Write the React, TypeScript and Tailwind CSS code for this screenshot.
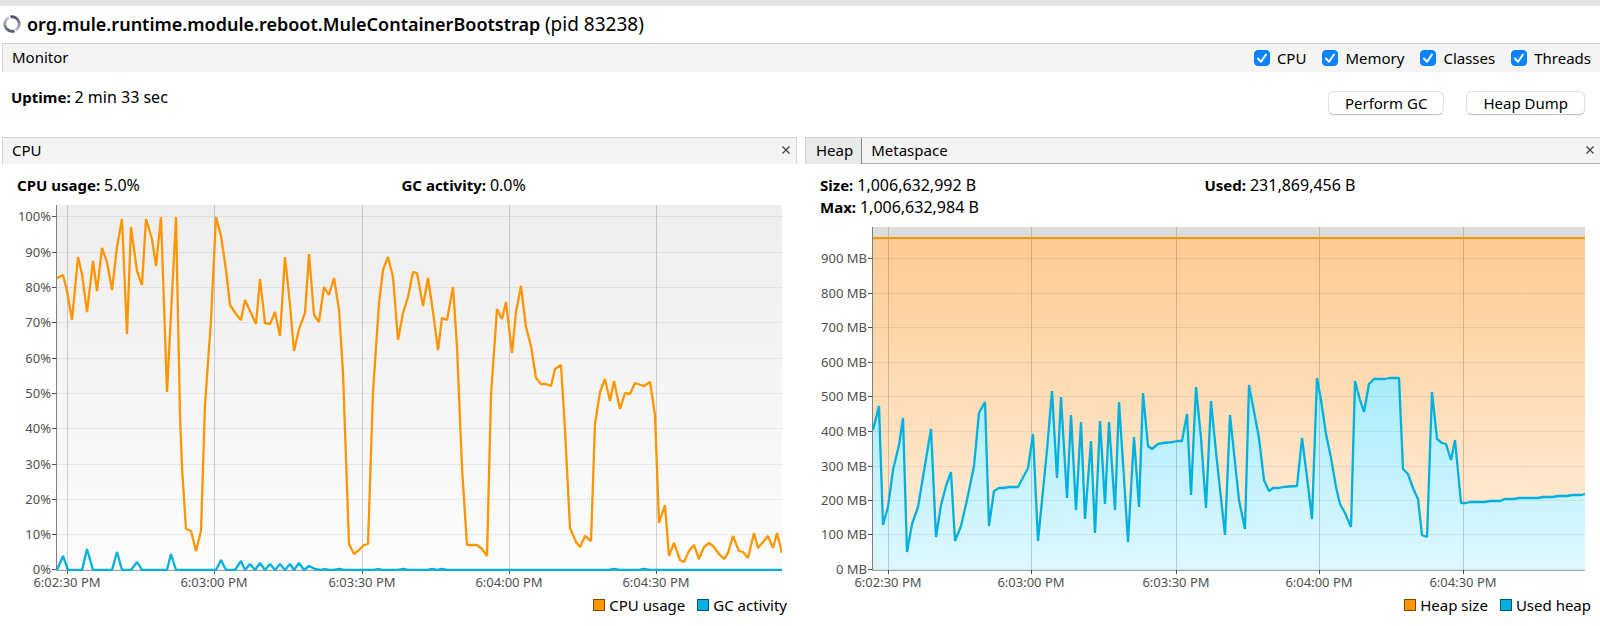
import React from 'react';
import { clsx } from 'clsx';

interface TickProps {
  pos: number;
  label: string;
}

const CPU_USAGE =
  '57,278 63,275 67,291 72,320 78,257 82,274 87,312 93,261 97,291 102,248 107,262 112,290 117,247 122,219 127,334 131,227 137,271 142,285 146,219 152,239 156,266 161,217 167,392 176,217 180,415 182,468 186,529 191,531 196,551 201,531 205,405 211,320 216,217 221,236 226,270 230,305 236,314 241,320 245,300 256,324 260,279 265,323 270,324 275,312 280,336 285,257 290,305 294,351 299,329 305,313 309,254 314,315 319,322 324,287 329,295 334,278 339,310 343,373 349,544 354,554 359,550 364,545 368,544 373,392 379,303 383,270 388,257 393,277 398,340 403,313 408,297 413,272 417,273 423,306 428,278 433,312 438,350 442,318 447,320 453,287 457,347 462,468 467,545 477,545 482,549 487,556 491,395 497,309 502,319 506,302 512,353 516,312 521,286 526,327 531,346 536,378 541,384 546,384 551,386 555,369 561,365 565,430 570,528 576,542 580,547 585,536 591,541 595,424 600,392 605,379 610,401 614,381 620,409 625,393 630,394 635,383 644,386 650,382 655,415 659,523 665,505 669,556 674,543 680,560 684,562 689,551 694,545 699,559 704,547 709,543 713,546 719,554 724,559 728,553 733,536 739,551 743,552 748,558 754,533 758,548 768,536 773,548 777,533 782,553';

const GC_ACTIVITY =
  '57,570 63,556 68,570 82,570 87,549 93,570 112,570 117,552 122,570 131,570 137,562 142,570 167,570 171,554 176,570 216,570 221,560 226,570 235,570 241,561 245,570 250,564 255,570 260,563 265,570 270,564 275,570 280,564 285,570 290,564 294,570 299,563 304,570 309,566 315,569 320,570 324,569 329,570 334,570 339,569 344,570 374,570 379,569 383,570 398,570 403,569 408,570 427,570 432,569 437,570 442,569 447,570 609,570 614,569 620,570 639,570 644,569 650,570 782,570';

const USED_HEAP =
  '873,430 879,406 883,525 888,507 893,470 899,445 903,418 907,552 912,524 918,507 931,429 936,537 941,505 946,486 951,472 955,541 961,526 967,500 974,466 979,413 985,402 989,526 994,491 999,488 1004,488 1009,487 1018,487 1028,468 1033,434 1038,541 1047,450 1052,391 1057,478 1061,397 1067,498 1071,415 1076,510 1081,422 1085,519 1091,441 1095,533 1100,421 1105,504 1109,422 1115,510 1119,402 1124,478 1128,542 1134,437 1139,507 1143,393 1148,446 1152,449 1158,444 1163,443 1173,442 1177,441 1182,441 1187,414 1191,495 1196,387 1201,438 1206,508 1211,401 1216,452 1225,535 1230,415 1239,500 1245,529 1249,385 1259,438 1264,480 1269,491 1273,488 1279,488 1283,487 1297,486 1302,438 1307,477 1312,519 1317,378 1321,400 1326,434 1331,458 1336,487 1340,504 1345,513 1351,527 1355,381 1360,400 1364,412 1369,384 1374,379 1385,379 1389,378 1399,378 1403,469 1408,474 1413,488 1418,499 1422,535 1427,537 1432,392 1437,439 1442,443 1446,444 1451,460 1455,440 1461,503 1466,503 1470,502 1485,502 1490,501 1500,501 1505,499 1514,499 1519,498 1538,498 1543,497 1553,497 1558,496 1567,496 1572,495 1581,495 1585,494';

const CPU_Y: TickProps[] = [
  { pos: 216, label: '100%' },
  { pos: 252, label: '90%' },
  { pos: 287, label: '80%' },
  { pos: 322, label: '70%' },
  { pos: 358, label: '60%' },
  { pos: 393, label: '50%' },
  { pos: 428, label: '40%' },
  { pos: 464, label: '30%' },
  { pos: 499, label: '20%' },
  { pos: 534, label: '10%' },
  { pos: 569, label: '0%' },
];

const CPU_X: TickProps[] = [
  { pos: 67, label: '6:02:30 PM' },
  { pos: 214, label: '6:03:00 PM' },
  { pos: 362, label: '6:03:30 PM' },
  { pos: 509, label: '6:04:00 PM' },
  { pos: 656, label: '6:04:30 PM' },
];

const HEAP_Y: TickProps[] = [
  { pos: 258, label: '900 MB' },
  { pos: 293, label: '800 MB' },
  { pos: 327, label: '700 MB' },
  { pos: 362, label: '600 MB' },
  { pos: 396, label: '500 MB' },
  { pos: 431, label: '400 MB' },
  { pos: 466, label: '300 MB' },
  { pos: 500, label: '200 MB' },
  { pos: 534, label: '100 MB' },
  { pos: 569, label: '0 MB' },
];

const HEAP_X: TickProps[] = [
  { pos: 888, label: '6:02:30 PM' },
  { pos: 1031, label: '6:03:00 PM' },
  { pos: 1176, label: '6:03:30 PM' },
  { pos: 1319, label: '6:04:00 PM' },
  { pos: 1463, label: '6:04:30 PM' },
];

interface GridProps {
  xTicks: TickProps[];
  yTicks: TickProps[];
  left: number;
  right: number;
  top: number;
  bottom: number;
}

// Grid lines inside the plot area
const Grid: React.FC<GridProps> = ({ xTicks, yTicks, left, right, top, bottom }) => (
  <g stroke="#000" strokeWidth="1">
    {yTicks.map(t => (
      <line key={t.label} x1={left} x2={right} y1={t.pos + 0.5} y2={t.pos + 0.5} strokeOpacity="0.13" strokeDasharray="1 1" />
    ))}
    {xTicks.map(t => (
      <line key={t.label} x1={t.pos + 0.5} x2={t.pos + 0.5} y1={top} y2={bottom} strokeOpacity="0.17" />
    ))}
  </g>
);

// Axis lines, tick marks and their labels
const Axes: React.FC<GridProps> = ({ xTicks, yTicks, left, right, top, bottom }) => (
  <g fill="#505050" fontSize="13">
    <rect x={left - 1} y={top} width="1" height={bottom - top + 1} fill="#808080" />
    <rect x={left - 1} y={bottom} width={right - left + 1} height="1" fill="#a0a0a0" />
    {yTicks.map(t => (
      <g key={t.label}>
        <rect x={left - 5} y={t.pos} width="4" height="1" />
        <text x={left - 6} y={t.pos + 5} textAnchor="end">{t.label}</text>
      </g>
    ))}
    {xTicks.map(t => (
      <g key={t.label}>
        <rect x={t.pos} y={bottom} width="1" height="4" />
        <text x={t.pos} y={bottom + 17} textAnchor="middle">{t.label}</text>
      </g>
    ))}
  </g>
);

const CpuChart: React.FC = () => {
  const area = { xTicks: CPU_X, yTicks: CPU_Y, left: 57, right: 782, top: 205, bottom: 570 };

  return (
    <svg viewBox="2 205 795 388" className="block w-full h-auto" role="img" aria-label="CPU usage and GC activity">
      <defs>
        <linearGradient id="cpu-bg" x1="0" y1="0" x2="0" y2="1">
          <stop offset="0" stopColor="#eeeeee" />
          <stop offset="1" stopColor="#fcfcfc" />
        </linearGradient>
        <clipPath id="cpu-clip">
          <rect x="57" y="205" width="725" height="366" />
        </clipPath>
      </defs>
      <rect x="57" y="205" width="725" height="365" fill="url(#cpu-bg)" />
      <Grid {...area} />
      <Axes {...area} />
      <g fill="none" strokeWidth="2.3" strokeLinejoin="bevel" clipPath="url(#cpu-clip)">
        <polyline points={CPU_USAGE} stroke="#ff9500" />
        <polyline points={GC_ACTIVITY} stroke="#00b0de" />
      </g>
    </svg>
  );
};

const HeapChart: React.FC = () => {
  const area = { xTicks: HEAP_X, yTicks: HEAP_Y, left: 873, right: 1585, top: 227, bottom: 570 };

  return (
    <svg viewBox="805 227 795 366" className="block w-full h-auto" role="img" aria-label="Heap size and used heap">
      <defs>
        <linearGradient id="heap-size" gradientUnits="userSpaceOnUse" x1="0" y1="238" x2="0" y2="570">
          <stop offset="0" stopColor="#fecb93" />
          <stop offset="1" stopColor="#fff0de" />
        </linearGradient>
        <linearGradient id="heap-used" gradientUnits="userSpaceOnUse" x1="0" y1="378" x2="0" y2="570">
          <stop offset="0" stopColor="#a9ecfc" />
          <stop offset="1" stopColor="#def8ff" />
        </linearGradient>
      </defs>
      <rect x="873" y="227" width="712" height="343" fill="#dcdcdc" />
      <rect x="873" y="238" width="712" height="332" fill="url(#heap-size)" />
      <polygon points={`873,570 ${USED_HEAP} 1585,570`} fill="url(#heap-used)" />
      <Grid {...area} />
      <rect x="873" y="237" width="712" height="2" fill="#ff9500" />
      <Axes {...area} />
      <polyline points={USED_HEAP} fill="none" stroke="#00b0de" strokeWidth="2.3" strokeLinejoin="bevel" />
    </svg>
  );
};

interface LegendProps {
  items: { label: string; color: string }[];
  className?: string;
}

const Legend: React.FC<LegendProps> = ({ items, className }) => (
  <ul className={clsx('flex justify-end gap-3 leading-6', className)}>
    {items.map(item => (
      <li key={item.label} className="flex items-center gap-1">
        <span className={clsx('h-3 w-3 border border-black/50', item.color)} />
        {item.label}
      </li>
    ))}
  </ul>
);

const CloseButton: React.FC<{ label: string }> = ({ label }) => (
  <button type="button" aria-label={label} className="ml-auto mr-1 p-0.5 text-[#4a4a4a]">
    <svg width="8" height="8" viewBox="0 0 8 8" stroke="currentColor" strokeWidth="1.4">
      <path d="M0.5 0.5L7.5 7.5M7.5 0.5L0.5 7.5" />
    </svg>
  </button>
);

const Stat: React.FC<{ name: string; value: string }> = ({ name, value }) => (
  <p>
    <b className="font-bold">{name}:</b> <span className="text-[16px] leading-none">{value}</span>
  </p>
);

const CheckOption: React.FC<{ label: string }> = ({ label }) => (
  <label className="flex items-center gap-[7px]">
    <span className="relative h-4 w-4">
      <input
        type="checkbox"
        defaultChecked
        className="peer block h-4 w-4 appearance-none rounded-[4px] border border-gray-300 bg-white checked:border-[#0a7cf5] checked:bg-[#0a84ff]"
      />
      <svg
        viewBox="0 0 16 16"
        className="pointer-events-none absolute inset-0 hidden h-4 w-4 peer-checked:block"
        fill="none"
        stroke="#fff"
        strokeWidth="2"
        strokeLinecap="round"
        strokeLinejoin="round"
      >
        <path d="M4 8.5L7 11.8L12 4.5" />
      </svg>
    </span>
    {label}
  </label>
);

const PushButton: React.FC<{ label: string }> = ({ label }) => (
  <button
    type="button"
    className="h-6 rounded-md border border-[#e2e2e2] border-b-[#c4c4c4] bg-white px-4 leading-5 shadow-xs"
  >
    {label}
  </button>
);

// Open ring made of two swooshes, dark at the heads and fading at the tails
const AppIcon: React.FC = () => (
  <svg width="18" height="18" viewBox="0 0 18 18" fill="none">
    <defs>
      <linearGradient id="ring-right" x1="0" y1="0" x2="0" y2="1">
        <stop offset="0" stopColor="#4e5368" />
        <stop offset="1" stopColor="#c9cbd2" />
      </linearGradient>
      <linearGradient id="ring-left" x1="0" y1="0" x2="0" y2="1">
        <stop offset="0" stopColor="#cfcfd4" />
        <stop offset="1" stopColor="#565c70" />
      </linearGradient>
    </defs>
    <path d="M7.5 1.9A7.3 7.3 0 0 1 12.5 15.4" stroke="url(#ring-right)" strokeWidth="3" />
    <path d="M11.5 15.9A7.3 7.3 0 0 1 6 2.4" stroke="url(#ring-left)" strokeWidth="3" />
  </svg>
);

const App: React.FC = () => {
  return (
    <main className="bg-white pb-2 font-['Noto_Sans','Open_Sans',sans-serif] text-[15px] leading-[22px] text-black">
      <div className="h-[6px] border-b border-[#ececec] bg-[#e4e4e4]" />

      <header className="flex h-[37px] items-center gap-1.5 pb-[2px] pl-[3px] text-lg">
        <AppIcon />
        <h1 className="font-normal">
          <b className="font-semibold">org.mule.runtime.module.reboot.MuleContainerBootstrap</b>{' '}
          <span className="text-[19px] leading-none">(pid 83238)</span>
        </h1>
      </header>

      <div className="ml-[2px]">
        <div className="flex h-[29px] items-center justify-between border-l border-t border-[#d4d4d4] bg-[#f4f4f4] pl-[9px] pr-[9px]">
          <h2 className="pb-[2px]">Monitor</h2>
          <div className="flex gap-4">
            <CheckOption label="CPU" />
            <CheckOption label="Memory" />
            <CheckOption label="Classes" />
            <CheckOption label="Threads" />
          </div>
        </div>

        <div className="flex h-[65px] justify-between pl-[9px] pr-[15px]">
          <div className="pt-[14px]">
            <Stat name="Uptime" value="2 min 33 sec" />
          </div>
          <div className="flex items-start gap-[22px] pt-[19px]">
            <PushButton label="Perform GC" />
            <PushButton label="Heap Dump" />
          </div>
        </div>

        <div className="grid grid-cols-2 gap-2">
          <section>
            <div className="flex h-[27px] items-center border-x border-t border-[#d4d4d4] bg-[#f4f4f4] pb-[2px] pl-[9px]">
              <h2>CPU</h2>
              <CloseButton label="Close CPU" />
            </div>
            <div className="grid grid-cols-2 pb-[9px] pl-[15px] pr-[11px] pt-[10px]">
              <Stat name="CPU usage" value="5.0%" />
              <Stat name="GC activity" value="0.0%" />
            </div>
            <CpuChart />
            <Legend
              className="pr-2.5"
              items={[
                { label: 'CPU usage', color: 'bg-[#ff9500]' },
                { label: 'GC activity', color: 'bg-[#00b0de]' },
              ]}
            />
          </section>

          <section>
            <div className="flex h-[27px] border-l border-t border-[#d4d4d4] bg-[#f4f4f4]">
              <button type="button" className="border-r border-[#888] bg-[#eaeaea] pb-[2px] pl-2.5 pr-2">Heap</button>
              <div className="flex flex-1 items-center border-b border-[#b0b0b0] pb-px">
                <button type="button" className="px-[9px]">Metaspace</button>
                <CloseButton label="Close Heap" />
              </div>
            </div>
            <div className="grid grid-cols-2 pb-[9px] pl-[15px] pr-[11px] pt-[10px]">
              <Stat name="Size" value="1,006,632,992 B" />
              <Stat name="Used" value="231,869,456 B" />
              <Stat name="Max" value="1,006,632,984 B" />
            </div>
            <HeapChart />
            <Legend
              className="pr-[9px]"
              items={[
                { label: 'Heap size', color: 'bg-[#ff9500]' },
                { label: 'Used heap', color: 'bg-[#00b0de]' },
              ]}
            />
          </section>
        </div>
      </div>
    </main>
  );
};

export default App;
